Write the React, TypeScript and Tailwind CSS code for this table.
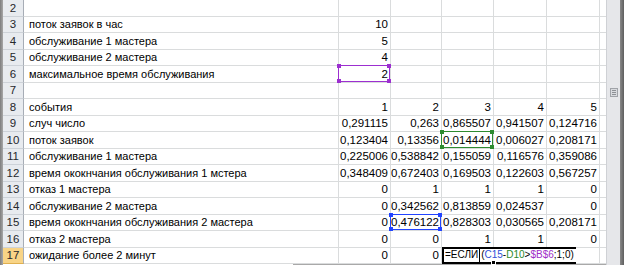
type Sel = 'purple' | 'green' | 'blue'

interface RowData {
  n: number
  label?: string
  vals?: string[]
  h: string
  sel?: { col: number; kind: Sel }
}

const rows: RowData[] = [
  { n: 2, h: 'h-[17px]' },
  { n: 3, label: 'поток заявок в час', vals: ['10'], h: 'h-[16px]' },
  { n: 4, label: 'обслуживание 1 мастера', vals: ['5'], h: 'h-[17px]' },
  { n: 5, label: 'обслуживание 2 мастера', vals: ['4'], h: 'h-[16px]' },
  { n: 6, label: 'максимальное время обслуживания', vals: ['2'], h: 'h-[17px]', sel: { col: 0, kind: 'purple' } },
  { n: 7, h: 'h-[16px]' },
  { n: 8, label: 'события', vals: ['1', '2', '3', '4', '5'], h: 'h-[17px]' },
  { n: 9, label: 'случ число', vals: ['0,291115', '0,263', '0,865507', '0,941507', '0,124716'], h: 'h-[16px]' },
  { n: 10, label: 'поток заявок', vals: ['0,123404', '0,13356', '0,014444', '0,006027', '0,208171'], h: 'h-[17px]', sel: { col: 2, kind: 'green' } },
  { n: 11, label: 'обслуживание 1 мастера', vals: ['0,225006', '0,538842', '0,155059', '0,116576', '0,359086'], h: 'h-[16px]' },
  { n: 12, label: 'время ококнчания обслуживания 1 мстера', vals: ['0,348409', '0,672403', '0,169503', '0,122603', '0,567257'], h: 'h-[17px]' },
  { n: 13, label: 'отказ 1 мастера', vals: ['0', '1', '1', '1', '0'], h: 'h-[16px]' },
  { n: 14, label: 'обслуживание 2 мастера', vals: ['0', '0,342562', '0,813859', '0,024537', '0'], h: 'h-[17px]' },
  { n: 15, label: 'время ококнчания обслуживания 2 мастера', vals: ['0', '0,476122', '0,828303', '0,030565', '0,208171'], h: 'h-[16px]', sel: { col: 1, kind: 'blue' } },
  { n: 16, label: 'отказ 2 мастера', vals: ['0', '0', '1', '1', '0'], h: 'h-[17px]' },
]

const selBorder: Record<Sel, string> = {
  purple: 'border-[#9c2fd0]',
  green: 'border-[#2e8b30]',
  blue: 'border-[#2244ff]',
}
const selDot: Record<Sel, string> = {
  purple: 'bg-[#9c2fd0]',
  green: 'bg-[#2e8b30]',
  blue: 'bg-[#2244ff]',
}

function Selection({ kind }: { kind: Sel }) {
  return (
    <div className={`absolute -left-[1px] -top-[1px] right-0 bottom-0 border ${selBorder[kind]} pointer-events-none`}>
      <span className={`absolute -left-[2px] -top-[2px] w-[4px] h-[4px] ${selDot[kind]}`} />
      <span className={`absolute -right-[2px] -top-[2px] w-[4px] h-[4px] ${selDot[kind]}`} />
      <span className={`absolute -left-[2px] -bottom-[2px] w-[4px] h-[4px] ${selDot[kind]}`} />
      <span className={`absolute -right-[2px] -bottom-[2px] w-[4px] h-[4px] ${selDot[kind]}`} />
    </div>
  )
}

const grid = 'grid grid-cols-[21px_315px_52px_51px_52px_53px_53px_6px]'
const cell = 'relative border-r border-b border-[#dadcdd] flex items-end justify-end pr-[2px] pb-[1px] leading-[14px] text-[11.5px]'
const labelCell =
  "border-r border-b border-[#dadcdd] flex items-end pl-[5px] pb-[1px] leading-[14px] whitespace-nowrap overflow-hidden font-['Liberation_Sans_Narrow','Liberation_Sans',sans-serif] text-[11px]"

function Header({ n, active }: { n: number; active?: boolean }) {
  return (
    <div
      className={`flex items-end justify-center pb-[1px] leading-[14px] border-r border-b border-r-[#a7adb6] text-[#26282c] ${
        active ? 'bg-[#f8d486] border-b-[#e0b050]' : 'bg-[#e8ebef] border-b-[#cdd2d8]'
      }`}
    >
      {n}
    </div>
  )
}

function Row({ r }: { r: RowData }) {
  return (
    <div className={`${grid} ${r.h}`}>
      <Header n={r.n} />
      <div className={labelCell}>{r.label}</div>
      {[0, 1, 2, 3, 4].map((i) => (
        <div key={i} className={cell}>
          {r.vals?.[i]}
          {r.sel && r.sel.col === i && <Selection kind={r.sel.kind} />}
        </div>
      ))}
      <div className="border-b border-[#dadcdd]" />
    </div>
  )
}

export default function App() {
  return (
    <div className="flex w-[624px] h-[265px] overflow-hidden bg-white text-black font-['Liberation_Sans',Arial,sans-serif] text-[11.5px]">
      <div className="w-[3px] bg-gradient-to-r from-[#7d7d7d] to-[#a8a8a8]" />
      <div className="flex flex-col w-[603px]">
        {rows.map((r) => (
          <Row key={r.n} r={r} />
        ))}
        <div className={`${grid} h-[16px]`}>
          <Header n={17} active />
          <div className={labelCell}>ожидание более 2 минут</div>
          <div className={cell}>0</div>
          <div className={cell}>0</div>
          <div className={`${cell} z-10`}>
            <div className="absolute left-0 -top-[1px] h-[17px] border-2 border-r-0 border-black bg-white flex items-end pl-[1px] pb-[1px] leading-[13px] whitespace-nowrap text-[10px]">
              <span>=ЕСЛИ</span>
              <span className="w-[1px] h-[15px] bg-black mx-[1px] self-center" />
              <span>(</span>
              <span className="text-[#2f4fd8]">C15</span>
              <span>-</span>
              <span className="text-[#2b8a2b]">D10</span>
              <span>&gt;</span>
              <span className="text-[#a030c8]">$B$6</span>
              <span>;1;0)</span>
              <span className="w-[2px]" />
            </div>
            <div className="absolute left-0 -top-[1px] w-[53px] border-t-2 border-black" />
            <span className="absolute -right-[3px] -bottom-[2px] w-[5px] h-[5px] bg-black border border-white" />
          </div>
          <div className="border-b border-[#dadcdd]" />
          <div className="border-r border-b border-[#dadcdd]" />
          <div className="border-b border-[#dadcdd]" />
        </div>
        <div className="flex h-[1px]">
          <div className="w-[290px]" />
          <div className="flex-1 bg-[#a9a9a9]" />
        </div>
      </div>
      <div className="w-[14px] bg-[#e6e7ea] border-l border-[#cfd1d5] flex flex-col items-center pt-[88px]">
        <div className="w-[8px] h-[9px] flex flex-col justify-between border border-[#a0a3a8] bg-[#d9dbdf] p-[1px]">
          <span className="h-[1px] bg-[#8d9095]" />
          <span className="h-[1px] bg-[#8d9095]" />
          <span className="h-[1px] bg-[#8d9095]" />
        </div>
      </div>
      <div className="w-[4px] bg-gradient-to-r from-[#8a8a8a] to-[#5e5e5e]" />
    </div>
  )
}
